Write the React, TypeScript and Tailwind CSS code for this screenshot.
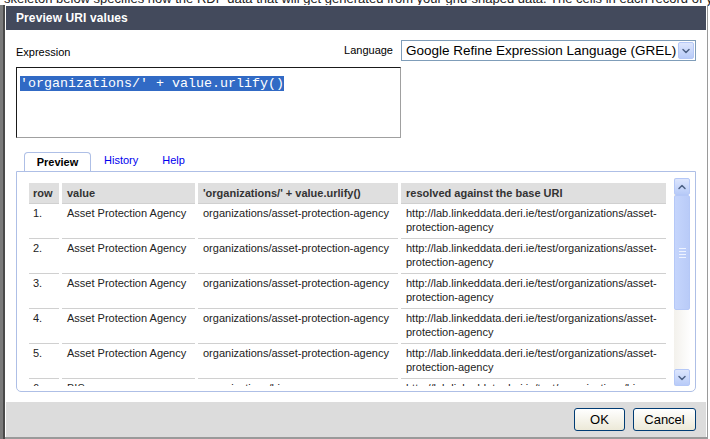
import { ChevronDown, ChevronUp } from 'lucide-react';

const rows = [
  { n: '1.', value: 'Asset Protection Agency', uri: 'organizations/asset-protection-agency' },
  { n: '2.', value: 'Asset Protection Agency', uri: 'organizations/asset-protection-agency' },
  { n: '3.', value: 'Asset Protection Agency', uri: 'organizations/asset-protection-agency' },
  { n: '4.', value: 'Asset Protection Agency', uri: 'organizations/asset-protection-agency' },
  { n: '5.', value: 'Asset Protection Agency', uri: 'organizations/asset-protection-agency' },
  { n: '6.', value: 'BIS', uri: 'organizations/bis' },
];

const base = 'http://lab.linkeddata.deri.ie/test/';

function ScrollButton({ down = false }: { down?: boolean }) {
  return (
    <div className="flex h-[17px] w-[16px] shrink-0 items-center justify-center rounded-[2px] border border-[#b5c8f7] bg-gradient-to-b from-[#dde6fd] to-[#b8cbf8] text-[#4d6185]">
      {down ? <ChevronDown className="h-3 w-3" strokeWidth={3} /> : <ChevronUp className="h-3 w-3" strokeWidth={3} />}
    </div>
  );
}

export default function App() {
  return (
    <div className="relative h-[439px] w-[710px] overflow-hidden bg-white font-['Liberation_Sans',Arial,sans-serif]">
      <div className="absolute -top-[11px] left-[4px] whitespace-nowrap text-[13px] text-[#222]">
        skeleton below specifies how the RDF data that will get generated from your grid-shaped data. The cells in each record of your data will get placed
      </div>
      <div className="absolute bottom-0 left-0 top-[5px] w-[5px] border-r-2 border-[#4a4a4a] bg-[#7a7a7a]" />

      {/* dialog */}
      <div className="absolute bottom-0 left-[5px] right-[2px] top-[5px] flex flex-col border-b-2 border-r border-[#9a9a9a] bg-white p-[1px]">
        <div className="flex h-[24px] shrink-0 items-center bg-[#434a5c] px-[10px]">
          <span className="text-[12px] font-bold tracking-[0.1px] text-white">Preview URI values</span>
        </div>

        <div className="flex flex-1 flex-col px-[10px] pt-[10px]">
          <div className="flex h-[21px] items-end justify-between">
            <span className="pb-[1px] text-[11px] text-black">Expression</span>
            <div className="flex items-center gap-[8px]">
              <span className="text-[11px] text-black">Language</span>
              <div className="flex h-[21px] w-[295px] items-center border border-[#7f9db9] bg-white pl-[4px] pr-[1px]">
                <span className="flex-1 whitespace-nowrap text-[13.5px] leading-none text-black">Google Refine Expression Language (GREL)</span>
                <div className="flex h-[17px] w-[16px] shrink-0 items-center justify-center rounded-[2px] border border-[#b5c8f7] bg-gradient-to-b from-[#dde6fd] to-[#b8cbf8] text-[#4d6185]">
                  <ChevronDown className="h-3 w-3" strokeWidth={3} />
                </div>
              </div>
            </div>
          </div>

          <div className="mt-[6px] h-[71px] w-[385px] border border-b-[#a0a0a0] border-l-[#1a1a1a] border-r-[#a0a0a0] border-t-[#1a1a1a] px-[3px] pt-[2px]">
            <span className="bg-[#316ac5] font-['Liberation_Mono','Courier_New',monospace] text-[13.33px] leading-[16px] text-white">
              'organizations/' + value.urlify()
            </span>
          </div>

          {/* tabs */}
          <div className="mt-[14px] flex h-[19px] items-end pl-[8px]">
            <div className="flex h-[19px] w-[67px] items-center justify-center rounded-t-[4px] border border-b-0 border-[#aebfe6] bg-white text-[11px] font-bold text-black">
              Preview
            </div>
            <span className="ml-[13px] pb-[3px] text-[11px] text-[#0000ee]">History</span>
            <span className="ml-[24px] pb-[3px] text-[11px] text-[#0000ee]">Help</span>
          </div>

          <div className="h-[221px] rounded-b-[5px] border border-[#aebfe6] pb-[5px] pl-[12px] pr-[5px] pt-[6px]">
            <div className="flex h-[208px] gap-[8px] overflow-hidden">
              <div className="flex-1 overflow-hidden pt-[5px]">
                <div className="grid grid-cols-[30px_133px_200px_265px] gap-x-[3px] text-[11px] text-[#222]">
                  <div className="flex h-[20px] items-center bg-[#dfdfdf] pl-[4px] font-bold text-[#333]">row</div>
                  <div className="flex h-[20px] items-center bg-[#dfdfdf] pl-[5px] font-bold text-[#333]">value</div>
                  <div className="flex h-[20px] items-center bg-[#dfdfdf] pl-[5px] font-bold text-[#333]">'organizations/' + value.urlify()</div>
                  <div className="flex h-[20px] items-center bg-[#dfdfdf] pl-[5px] font-bold text-[#333]">resolved against the base URI</div>
                  {rows.map((r) => (
                    <div key={r.n} className="contents">
                      <div className="h-[35px] border-t border-[#d0d0d0] pl-[4px] pt-[2px] leading-[14px]">{r.n}</div>
                      <div className="h-[35px] border-t border-[#d0d0d0] pl-[5px] pt-[2px] leading-[14px]">{r.value}</div>
                      <div className="h-[35px] border-t border-[#d0d0d0] pl-[5px] pt-[2px] leading-[14px]">{r.uri}</div>
                      <div className="h-[35px] border-t border-[#d0d0d0] pl-[5px] pr-[6px] pt-[2px] leading-[14px]">
                        {base + r.uri}
                      </div>
                    </div>
                  ))}
                </div>
              </div>

              {/* scrollbar */}
              <div className="flex w-[16px] flex-col bg-gradient-to-r from-[#f3f1ec] to-[#fefefe]">
                <ScrollButton />
                <div className="flex h-[115px] flex-col items-center justify-center gap-[2px] rounded-[2px] border border-[#b5c8f7] bg-gradient-to-r from-[#c5d5fc] to-[#b9cbf8]">
                  <div className="h-px w-[7px] bg-[#eef3ff]" />
                  <div className="h-px w-[7px] bg-[#eef3ff]" />
                  <div className="h-px w-[7px] bg-[#eef3ff]" />
                  <div className="h-px w-[7px] bg-[#eef3ff]" />
                </div>
                <div className="flex-1" />
                <ScrollButton down />
              </div>
            </div>
          </div>
        </div>

        <div className="mt-[10px] flex h-[35px] shrink-0 items-center justify-end gap-[8px] bg-[#dcdcdc] pr-[10px]">
          <button type="button" className="h-[23px] w-[51px] rounded-[3px] border border-[#003c74] bg-gradient-to-b from-white to-[#ece9d8] text-[13px] text-black">
            OK
          </button>
          <button type="button" className="h-[23px] w-[63px] rounded-[3px] border border-[#003c74] bg-gradient-to-b from-white to-[#ece9d8] text-[13px] text-black">
            Cancel
          </button>
        </div>
      </div>
    </div>
  );
}
